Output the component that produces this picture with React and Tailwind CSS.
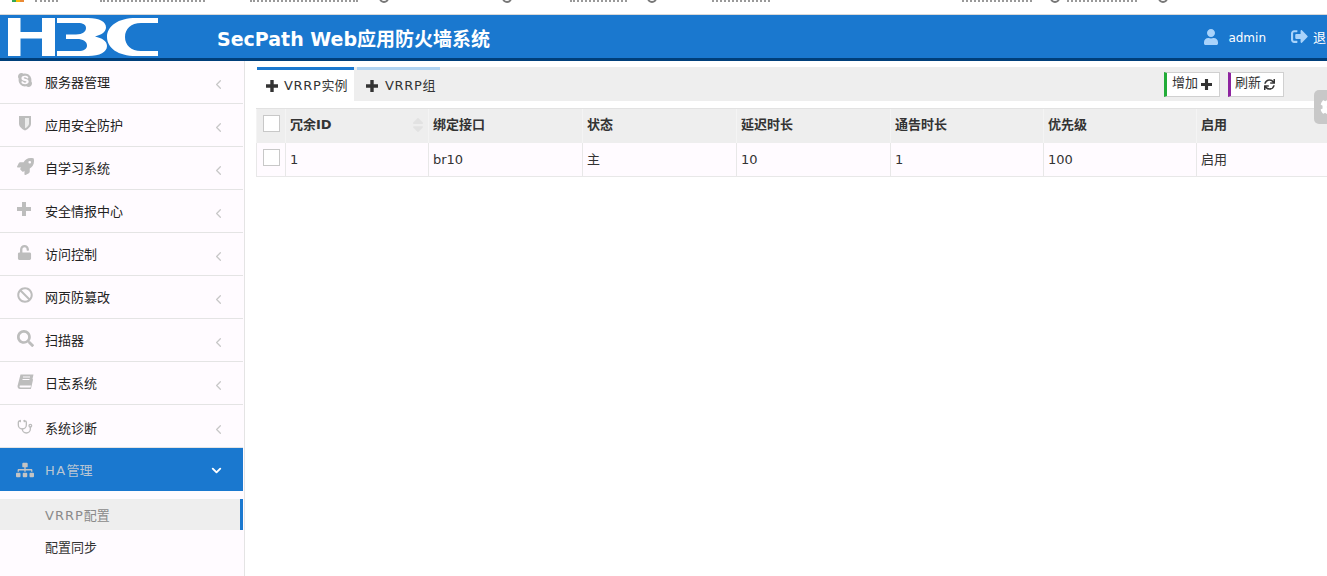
import {
  FaSkype, FaRocket, FaUnlock, FaBan, FaSearch,
  FaSitemap, FaUser, FaSignOutAlt, FaSync, FaCog, FaSort,
} from 'react-icons/fa';
import { FiChevronLeft, FiChevronDown } from 'react-icons/fi';
import { Stethoscope } from 'lucide-react';

const SquarePlus = ({ size = 12, className = '' }) => (
  <svg width={size} height={size} viewBox="0 0 12 12" fill="currentColor" className={className}>
    <path d="M0 4.3h4.3V0h3.4v4.3H12v3.4H7.7V12H4.3V7.7H0z" />
  </svg>
);

const ShieldIcon = ({ size = 16, className = '' }) => (
  <svg width={size} height={size} viewBox="0 0 14 16" className={className}>
    <path fill="currentColor" d="M1 1h12v7.5c0 3.5-3.5 5.8-6 7-2.5-1.2-6-3.5-6-7z" />
    <path fill="#ececec" d="M7 3h4v5.5c0 2.200-2 3.800-4 4.800z" />
  </svg>
);

const BookIcon = ({ size = 16, className = '' }) => (
  <svg width={size} height={size} viewBox="0 0 17 16" className={className}>
    <path fill="currentColor" d="M3.500 1h13L14 12H3.800c-1 0-1.400.6-1.200 1.200.2.600.6.800 1.400.8h9.500l2-8.500.6.500-2.200 9.500H3c-1.500 0-2.500-1-2.500-3z" />
    <path stroke="#fffbff" strokeWidth="1" d="M6 3.500h7M5.500 6h7" />
  </svg>
);

const menu = [
  { name: '服务器管理', Icon: FaSkype, size: 16 },
  { name: '应用安全防护', Icon: ShieldIcon, size: 16 },
  { name: '自学习系统', Icon: FaRocket, size: 17 },
  { name: '安全情报中心', Icon: SquarePlus, size: 14 },
  { name: '访问控制', Icon: FaUnlock, size: 15 },
  { name: '网页防篡改', Icon: FaBan, size: 16 },
  { name: '扫描器', Icon: FaSearch, size: 17 },
  { name: '日志系统', Icon: BookIcon, size: 17 },
  { name: '系统诊断', Icon: Stethoscope, size: 16 },
];

const columns = [
  { label: '冗余ID', value: '1', width: 'w-[143px]', sort: true },
  { label: '绑定接口', value: 'br10', width: 'w-[154px]' },
  { label: '状态', value: '主', width: 'w-[154px]' },
  { label: '延迟时长', value: '10', width: 'w-[154px]' },
  { label: '通告时长', value: '1', width: 'w-[153px]' },
  { label: '优先级', value: '100', width: 'w-[153px]' },
  { label: '启用', value: '启用', width: 'w-[154px]' },
];

const Checkbox = () => (
  <span className="block w-[17px] h-[17px] bg-white border border-[#c8c8c8]" />
);

const H3cLogo = () => (
  <svg width="150" height="38" viewBox="0 0 150 38" fill="#fff">
    <path d="M0 0h12.500v14H34V0h13v38H34V20.500H12.500V38H0z" />
    <path d="M49 0h31c12 0 18 4 18 9.500 0 4.500-5 7.500-11 9 7 1.500 12 4.500 12 9.500 0 6-7 10-19 10H49v-5h21c6 0 9-2 9-5.500 0-4-4-6.500-10-6.500H58v-4.500h10c7 0 10-3 10-6.500S75 5 70 5H49z" />
    <path d="M150 0v5h-17c-10 0-16 6-16 14s6 14 16 14h17v5h-22c-18 0-29-8-29-19S110 0 128 0z" />
  </svg>
);

const Ring = ({ className = '' }) => (
  <span className={`block w-[10px] h-[3px] overflow-hidden shrink-0 ${className}`}>
    <span className="block w-[10px] h-[10px] -mt-[7px] rounded-full border-2 border-[#777]" />
  </span>
);

const Crumb = ({ className = '' }) => (
  <span className={`block h-[2px] border-t-2 border-dotted border-[#999] shrink-0 ${className}`} />
);

// bottom edge of the browser bookmark bar, cut off by the screenshot
const BookmarkStrip = () => (
  <div className="h-[14px] shrink-0 flex items-start">
    <span className="ml-[12px] w-[4px] h-[2px] bg-[#34a853] shrink-0" />
    <span className="w-[4px] h-[2px] bg-[#fbbc05] shrink-0" />
    <span className="w-[4px] h-[2px] bg-[#ea8a35] shrink-0" />
    <Crumb className="ml-[11px] w-[23px]" />
    <Crumb className="ml-[42px] w-[105px]" />
    <Crumb className="ml-[45px] w-[108px]" />
    <Ring className="ml-[21px]" />
    <Ring className="ml-[113px]" />
    <Crumb className="ml-[58px] w-[57px]" />
    <Ring className="ml-[20px]" />
    <Crumb className="ml-[55px] w-[58px]" />
    <Crumb className="ml-[192px] w-[70px]" />
    <Ring className="ml-[18px]" />
    <Crumb className="ml-[7px] w-[70px]" />
    <Ring className="ml-[21px]" />
  </div>
);

const Topbar = () => (
  <header className="h-[47px] bg-[#1a78cf] border-b-[3px] border-[#003f7a] border-t border-t-[#d8d8d8] flex items-center shrink-0">
    <div className="pl-[8px] w-[217px] pt-[1px]">
      <H3cLogo />
    </div>
    <h1 className="text-white text-[19px] font-bold mt-[6px] whitespace-nowrap">SecPath Web应用防火墙系统</h1>
    <div className="ml-auto flex items-center text-[12px] text-white whitespace-nowrap mt-[2px]">
      <FaUser size={16} className="text-[#a9d3fb] mr-[9px] mt-[-2px]" />
      <span className="mr-[25px]">admin</span>
      <FaSignOutAlt size={17} className="text-[#a9d3fb] mr-[5px] mt-[-2px]" />
      <span className="w-[14px] overflow-hidden text-[13px]">退出</span>
    </div>
  </header>
);

const Sidebar = () => (
  <aside className="w-[245px] shrink-0 bg-[#fffbff] border-r border-[#e4e4e4] text-[13px] text-[#222]">
    <nav>
      {menu.map(({ name, Icon, size }) => (
        <div key={name} className="h-[43px] flex items-center pl-[17px] pr-[17px] mr-[1px] border-b border-[#e4e4e4]">
          <span className={`w-[28px] flex ${name === '系统诊断' ? 'mt-[1px]' : 'mt-[-4px]'}`}>
            <Icon size={size} className="text-[#bdbdbd]" />
          </span>
          <span className={`flex-1 ${name === '系统诊断' ? 'mt-[6px]' : 'mt-[2px]'}`}>{name}</span>
          <FiChevronLeft size={15} className={`text-[#c8c8c8] ${name === '系统诊断' ? 'mt-[6px]' : 'mt-[4px]'}`} />
        </div>
      ))}
      <div className="h-[43px] flex items-center pl-[16px] pr-[19px] mr-[1px] bg-[#1a78cf] text-[#b9c6d3]">
        <span className="w-[29px] flex">
          <FaSitemap size={18} className="text-[#c4c4c4]" />
        </span>
        <span className="flex-1 mt-[2px]"><span className="tracking-[1.4px]">HA</span>管理</span>
        <FiChevronDown size={15} className="text-white mt-[2px]" strokeWidth={3} />
      </div>
    </nav>
    <div className="pt-[8px]">
      <div className="h-[31px] flex items-center pl-[45px] bg-[#eeeeee] text-[#8a8a8a] border-r-[3px] border-[#1a78cf] mr-[1px]">
        <span className="mt-[2px]"><span className="tracking-[1px]">VRRP</span>配置</span>
      </div>
      <div className="h-[36px] flex items-center pl-[45px] text-[#333]">配置同步</div>
    </div>
  </aside>
);

const Tabs = () => (
  <div className="h-[34px] ml-[12px] bg-[#eeeeee] flex items-stretch text-[13px] text-[#333]">
    <div className="w-[97px] bg-white border-t-[3px] border-[#1a78cf] flex items-center pl-[9px] gap-[6px] whitespace-nowrap">
      <SquarePlus size={12} />
      <span><span className="tracking-[0.7px]">VRRP</span>实例</span>
    </div>
    <div className="w-[83px] ml-[3px] border-t-[3px] border-[#b0d3f1] flex items-center pl-[9px] gap-[7px] whitespace-nowrap">
      <SquarePlus size={12} />
      <span><span className="tracking-[0.7px]">VRRP</span>组</span>
    </div>
    <div className="ml-auto flex items-center gap-[8px] pr-[43px]">
      <button className="h-[25px] w-[56px] bg-white border border-[#d0d0d0] border-l-[3px] border-l-[#22ac38] flex items-center pl-[5px] gap-[3px]">
        <span className="mt-[-2px]">增加</span> <SquarePlus size={11} />
      </button>
      <button className="h-[25px] w-[56px] bg-white border border-[#d0d0d0] border-l-[3px] border-l-[#8e24a0] flex items-center pl-[4px] gap-[3px]">
        <span className="mt-[-2px]">刷新</span> <FaSync size={11} />
      </button>
    </div>
  </div>
);

const Table = () => (
  <div className="ml-[11px] mt-[7px] w-[1100px] text-[13px] text-[#333]">
    <div className="h-[35px] flex bg-[#eeeeee] border-t border-[#e2e2e2] font-bold">
      <div className="w-[30px] flex items-start pt-[6px] pl-[6px] border-l border-r border-[#f4f4f4]"><Checkbox /></div>
      {columns.map((col) => (
        <div key={col.label} className={`${col.width} shrink-0 flex items-center pb-[2px] pl-[4px] border-r border-[#f4f4f4] relative`}>
          {col.label}
          {col.sort && <FaSort size={18} className="absolute right-[1px] top-[7px] text-[#e2e2e2]" />}
        </div>
      ))}
    </div>
    <div className="h-[34px] flex bg-[#fffbff] border-b border-[#e8e8e8]">
      <div className="w-[30px] flex items-start pt-[6px] pl-[6px] border-l border-r border-[#e8e8e8]"><Checkbox /></div>
      {columns.map((col) => (
        <div key={col.label} className={`${col.width} shrink-0 flex items-center pl-[4px] border-r border-[#e8e8e8]`}>
          {col.value}
        </div>
      ))}
    </div>
  </div>
);

export default function App() {
  return (
    <div className="w-[1327px] h-[576px] overflow-hidden bg-white flex flex-col relative font-['DejaVu_Sans','Noto_Sans_CJK_SC',sans-serif]">
      <BookmarkStrip />
      <Topbar />
      <div className="flex flex-1 min-h-0">
        <Sidebar />
        <main className="flex-1 min-w-0 pt-[6px] overflow-hidden">
          <Tabs />
          <Table />
        </main>
      </div>
      <div className="absolute right-0 top-[90px] w-[13px] h-[34px] bg-[#c8c8c8] rounded-l-[5px] overflow-hidden flex items-center">
        <FaCog size={20} className="text-white shrink-0 ml-[6px]" />
      </div>
    </div>
  );
}
